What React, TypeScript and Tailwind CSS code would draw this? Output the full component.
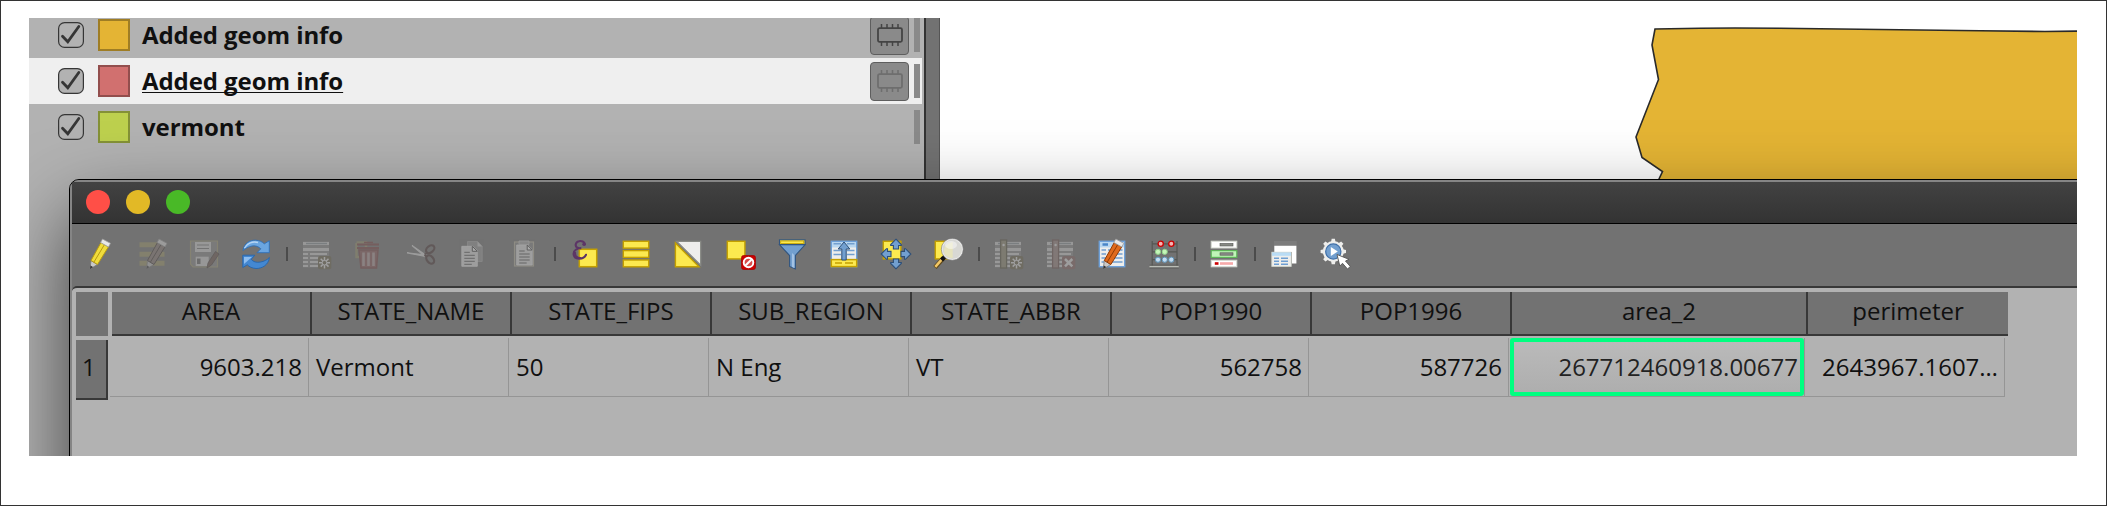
import React from "react";

type IconProps = { children: React.ReactNode; dim?: boolean };

const Icon = ({ children, dim }: IconProps) => (
  <svg viewBox="0 0 32 32" className={dim ? "h-8 w-8 shrink-0 opacity-35" : "h-8 w-8 shrink-0"} fill="none">
    {children}
  </svg>
);

const Separator = () => <div className="-ml-1.5 -mr-2 h-3.5 w-0.5 shrink-0 bg-[#4b4b4b]" />;

const Pencil = ({ body = "#f0dc3c", shade = "#b79a12" }: { body?: string; shade?: string }) => (
  <g>
    <path d="M6 31L7 22.5L13.5 26.5Z" fill="#c9c9c9" stroke="#777" strokeWidth=".8" />
    <path d="M6 31L6.5 27.5L9 29Z" fill="#333" />
    <path d="M7 22.5L17 4.5L24.5 8.8L13.5 26.5Z" fill={body} stroke={shade} strokeWidth="1" />
    <path d="M10 24L20.5 6.5" stroke={shade} strokeWidth="1" />
    <path d="M16.5 4.5L18.5 1L26.5 5.3L24.5 9Z" fill="#e8e8e8" stroke="#999" strokeWidth=".8" />
  </g>
);

const TableGrid = () => (
  <g>
    <rect x="3" y="3.5" width="26" height="26" fill="#8c8c8c" />
    <path d="M3 5.500H29M3 11.500H29" stroke="#dcdcdc" strokeWidth="3" />
    <path d="M6 5.500H27" stroke="#8a949c" strokeWidth="1.400" />
    <path d="M3 16H8M10 16H27M3 20H8M10 20H27M3 24H8M10 24H20M3 28H8M10 28H20" stroke="#e0e0e0" strokeWidth="2" />
  </g>
);

const Star = () => (
  <g>
    <rect x="18" y="18" width="13.3" height="13.3" rx="2" fill="#6a6246" />
    <path d="M24.5 19V30.5M19 24.7H30M20.7 20.8L28.5 28.6M28.5 20.8L20.7 28.6" stroke="#f2f2f2" strokeWidth="1.5" />
    <circle cx="24.5" cy="24.7" r="2.3" fill="#6a6246" stroke="#f2f2f2" />
  </g>
);

const YellowSquare = () => <rect x="3.3" y="3.3" width="17.6" height="17.6" fill="#fce94f" stroke="#c4a000" strokeWidth="1.4" />;

const EditMode = () => (
  <Icon>
    <Pencil />
  </Icon>
);

const MultiEdit = () => (
  <Icon dim>
    <path d="M3.5 6.8H28.5M3.5 16.2H28.5M3.5 25.3H28.5" stroke="#a39c66" strokeWidth="5" />
    <g transform="translate(4.5 0)">
      <Pencil body="#8b7a72" shade="#3f3431" />
    </g>
  </Icon>
);

const SaveEdits = () => (
  <Icon dim>
    <path d="M2.5 3H29.5V29H5L2.5 26Z" fill="#8a8a8a" stroke="#a8a173" strokeWidth="1.2" />
    <rect x="7" y="4" width="16" height="10" fill="#e0e0e0" />
    <path d="M9 7H21M9 10.5H21" stroke="#777" />
    <rect x="7.7" y="18.7" width="13" height="9.3" fill="#ddd" />
    <rect x="9" y="20.5" width="3.5" height="5.5" fill="#666" />
    <path d="M19 30L20 25L27.5 13.5L31 16L23.5 27Z" fill="#6c5148" stroke="#3f3431" strokeWidth=".8" />
  </Icon>
);

const Reload = () => (
  <Icon>
    <path d="M3 12.5C4 5 10 2 15.5 2.2C19.5 2.4 22.3 3.8 24.3 5.8L29.3 2.8V14.7H17L20.8 10.8C18.5 8.5 15.5 7.4 12 8C8.5 8.6 5.5 10.3 3 12.5Z" fill="#6aa5e0" stroke="#2f6fb8" strokeWidth=".9" />
    <path d="M4.5 10C7 4.8 13 3.2 18 4.5" stroke="#b5d5f4" strokeWidth="1.4" />
    <path d="M29.4 19.5C28.5 27 22 30.7 16 30.5C12 30.3 9.3 28.8 7.3 26.8L2.8 29.5V17.2H14.8L11.2 21.3C13.2 23.9 16.5 24.8 20.5 24C24 23.4 27 22 29.4 19.5Z" fill="#4488d2" stroke="#2565ae" strokeWidth=".9" />
    <path d="M4 19H12L4 26Z" fill="#8dbdf0" />
  </Icon>
);

const AddFeature = () => (
  <Icon dim>
    <TableGrid />
    <Star />
  </Icon>
);

const Trash = () => (
  <Icon dim>
    <path d="M4.5 4.5H14V9M4.5 5V19H8" stroke="#9c9568" strokeWidth="2.5" />
    <path d="M7 12H26L24.5 30H9Z" fill="#8d5555" stroke="#783d3d" strokeWidth="1.5" />
    <path d="M11.5 14.5V28M16.5 14.5V28M21.5 14.5V28" stroke="#b9a2a2" strokeWidth="2.6" />
    <path d="M5 6.5H27M5 10H27" stroke="#7c3939" strokeWidth="2.2" />
    <path d="M12 4.5H21" stroke="#7c3939" strokeWidth="1.5" />
  </Icon>
);

const Cut = () => (
  <Icon dim>
    <path d="M3 14.8L22 17L22 18.5Z" fill="#eee" stroke="#e8e8e8" strokeWidth="1.2" />
    <path d="M8 7.5L23 18L21 18.5Z" fill="#eee" stroke="#e8e8e8" strokeWidth="1.2" />
    <ellipse cx="26.2" cy="11.2" rx="4.7" ry="3.2" transform="rotate(-40 26.2 11.2)" stroke="#442c2c" strokeWidth="2.2" />
    <ellipse cx="26.2" cy="21.5" rx="4.7" ry="3.2" transform="rotate(50 26.2 21.5)" stroke="#442c2c" strokeWidth="2.2" />
    <path d="M20.5 16.5L24 14.5M20.5 17L23 19" stroke="#442c2c" strokeWidth="2" />
  </Icon>
);

const Page = () => (
  <g>
    <path d="M0 0H11L15.5 4.5V20H0Z" fill="#dedede" stroke="#f2f2f2" strokeWidth=".8" />
    <path d="M10.5 0V5H15.5Z" fill="#fff" stroke="#444" strokeWidth="1" />
    <path d="M2.5 6H8M2.5 9H13M2.5 12H13M2.5 15H13M2.5 18H10" stroke="#555" strokeWidth="1" />
  </g>
);

const Copy = () => (
  <svg viewBox="0 0 32 32" className="h-8 w-8 shrink-0 opacity-40" fill="none">
    <path d="M11.5 3.5H21.5L26.2 8.2V23.5H11.5Z" fill="#969696" stroke="#aaa" strokeWidth=".8" />
    <path d="M21.5 3.5V8.5H26.2Z" fill="#ccc" />
    <g transform="translate(5.8 8.3)">
      <Page />
    </g>
  </svg>
);

const Paste = () => (
  <svg viewBox="0 0 32 32" className="h-8 w-8 shrink-0 opacity-40" fill="none">
    <rect x="6.5" y="4" width="19" height="24" fill="#868686" stroke="#b9b3a0" strokeWidth="1.2" />
    <g transform="translate(8.7 7)">
      <Page />
    </g>
    <path d="M11 3H21V6.5H11Z" fill="#aaa" stroke="#d0d0d0" strokeWidth=".8" />
  </svg>
);

const SelectExpression = () => (
  <Icon>
    <rect x="11.3" y="11.3" width="17.4" height="17.4" fill="#fce94f" stroke="#c4a000" strokeWidth="1.5" />
    <path d="M17 6.5C16.5 3.5 13.5 2.6 11 3.2C7.3 4 6.7 8.2 9.3 9.7C10.5 10.4 12 10.3 13.3 10.2C9.5 10.3 5.5 12 5.6 16C5.8 22 15.5 22.2 18 16.8" stroke="#5c3566" strokeWidth="2.1" strokeLinecap="round" />
    <path d="M7.2 14C6.5 18.5 9.5 20.3 13 20" stroke="#5c3566" strokeWidth="2" />
    <circle cx="16" cy="6.2" r="1.7" fill="#5c3566" />
  </Icon>
);

const SelectAll = () => (
  <Icon>
    {[3.3, 12.6, 22].map((y) => (
      <rect key={y} x="3.3" y={y} width="25.4" height="6.8" fill="#fce94f" stroke="#c4a000" strokeWidth="1.4" />
    ))}
  </Icon>
);

const Invert = () => (
  <Icon>
    <path d="M4.5 3.3H28.7V27.2Z" fill="#eeeeec" stroke="#888a85" strokeWidth="1.3" />
    <path d="M3.4 5V28.8H27Z" fill="#fce94f" stroke="#c4a000" strokeWidth="1.4" />
  </Icon>
);

const Deselect = () => (
  <Icon>
    <YellowSquare />
    <rect x="17.6" y="17.6" width="13.8" height="13.8" rx="1.8" fill="#cc0000" stroke="#a40000" strokeWidth=".8" />
    <circle cx="24.5" cy="24.5" r="4.8" fill="#d94b4b" stroke="#fff" strokeWidth="1.9" />
    <path d="M21.2 27.8L27.8 21.2" stroke="#fff" strokeWidth="2" />
  </Icon>
);

const Filter = () => (
  <Icon>
    <path d="M3.6 6.8H29L19.4 17.5V31L13.6 28.5V17.5Z" fill="#729fcf" stroke="#32557f" strokeWidth="1.1" />
    <path d="M16 15V29L18.3 30V17" fill="#a3c2e4" />
    <rect x="3.5" y="1.8" width="25.5" height="4.7" fill="#fce94f" stroke="#32557f" strokeWidth="1.1" />
    <rect x="4.7" y="3" width="23" height="2.5" stroke="#c4a000" strokeWidth=".8" />
  </Icon>
);

const MoveTop = () => (
  <Icon>
    <rect x="3.3" y="3.3" width="25.4" height="25.4" fill="#eeeeec" stroke="#6ea0d8" strokeWidth="1.4" />
    <rect x="4" y="4" width="24" height="5.5" fill="#b9d7f0" />
    <path d="M5.5 5.8H13M19 5.8H26.5M5.5 12.5H13M19 12.5H26.5M5.5 16.5H13M19 16.5H26.5" stroke="#729fcf" strokeWidth="1.5" />
    <rect x="3.3" y="21.6" width="25.4" height="7" fill="#fce94f" stroke="#c4a000" strokeWidth="1.5" />
    <path d="M7 25H14M17 25H25" stroke="#c4a000" strokeWidth="1.4" />
    <path d="M16 4L21.8 11H18.2V22H13.8V11H10.2Z" fill="#729fcf" stroke="#2e4f77" strokeWidth="1" />
  </Icon>
);

const PanTo = () => (
  <Icon>
    <YellowSquare />
    {[0, 90, 180, 270].map((angle) => (
      <path key={angle} transform={`rotate(${angle} 16 16)`} d="M16 1.2L21.3 6.5V7.5H18.6V11H13.4V7.5H10.7V6.5Z" fill="#729fcf" stroke="#2e4f77" strokeWidth="1.1" />
    ))}
  </Icon>
);

const ZoomTo = () => (
  <Icon>
    <YellowSquare />
    <path d="M11.5 20L3 29.5" stroke="#5f4a1e" strokeWidth="4.4" />
    <path d="M10 21.2L3.3 28.8" stroke="#f3c766" strokeWidth="2.5" />
    <path d="M13 18.5L9.5 22" stroke="#111" strokeWidth="4" />
    <circle cx="20.3" cy="11.3" r="10.3" fill="#d8d8d4" stroke="#ededed" strokeWidth="1.2" />
    <circle cx="20.3" cy="11.3" r="11" stroke="#777" strokeWidth=".6" />
    <path d="M20.7 4V20C10 20 8 7 20.7 4Z" fill="#e6e3bd" />
    <ellipse cx="19" cy="7" rx="6" ry="4" fill="#fff" opacity=".45" />
  </Icon>
);

const NewField = () => (
  <Icon dim>
    <TableGrid />
    <rect x="8.6" y="2" width="6" height="28" fill="#938d70" stroke="#55503a" strokeWidth="1.3" />
    <circle cx="11.6" cy="7" r="1.2" fill="#eee" />
    <Star />
  </Icon>
);

const DeleteField = () => (
  <Icon dim>
    <TableGrid />
    <rect x="8.6" y="2" width="6" height="28" fill="#9d8580" stroke="#6c4d49" strokeWidth="1.3" />
    <circle cx="11.6" cy="7" r="1.2" fill="#eee" />
    <rect x="18" y="18" width="13.3" height="13.3" rx="2" fill="#86605e" />
    <path d="M21 21L28.3 28.3M28.3 21L21 28.3" stroke="#f0f0f0" strokeWidth="2.5" />
  </Icon>
);

const OrganizeFields = () => (
  <Icon>
    <rect x="3.3" y="3.3" width="25.4" height="25.4" fill="#eeeeec" stroke="#6ea0d8" strokeWidth="1.4" />
    <rect x="4" y="4" width="24" height="5.5" fill="#b9d7f0" />
    <path d="M6.5 6.5H12" stroke="#4a86c8" strokeWidth="2.4" />
    <path d="M5.5 12H10M12 12H26.5M5.5 16H10M12 16H26.5M5.5 20H10M12 20H26.5M5.5 24H8M15 24H26.5" stroke="#729fcf" strokeWidth="1.4" />
    <g transform="translate(1.3 0)">
      <Pencil body="#e06a1c" shade="#8f3b06" />
    </g>
  </Icon>
);

const Abacus = () => (
  <Icon>
    <path d="M4.2 3V28M29 3V28M4 5.8H29M4 13.8H29M4 21.7H29" stroke="#555753" strokeWidth="1.2" />
    <path d="M1.5 28.6H30.7" stroke="#babdb6" strokeWidth="1.8" />
    <path d="M1.5 27.2H30.7M1.5 30H30.7" stroke="#555753" strokeWidth=".8" />
    <g fill="#f5b5b5" stroke="#cc0000" strokeWidth="1.3">
      <circle cx="12.7" cy="5.8" r="2.6" />
      <circle cx="23.3" cy="5.8" r="2.6" />
    </g>
    <g fill="#c5f5b8" stroke="#8fd08a" strokeWidth="1">
      <circle cx="10" cy="13.8" r="2.6" />
      <circle cx="16.7" cy="13.8" r="2.6" />
    </g>
    <g fill="#c4dcf2" stroke="#5d94b8" strokeWidth="1">
      <circle cx="10" cy="21.7" r="2.6" />
      <circle cx="16.7" cy="21.7" r="2.6" />
      <circle cx="23.3" cy="21.7" r="2.6" />
    </g>
  </Icon>
);

const ConditionalFormat = () => (
  <Icon>
    <rect x="3.2" y="3.2" width="25.6" height="6.8" fill="#fff" stroke="#d3d7cf" />
    <rect x="3.2" y="12.6" width="25.6" height="6.8" fill="#c0f5b8" stroke="#5fb65a" strokeWidth="1.2" />
    <rect x="3.2" y="22.2" width="25.6" height="6.6" fill="#fff" stroke="#d3d7cf" />
    <rect x="12" y="5.4" width="13" height="2.6" fill="#888a85" stroke="#555753" strokeWidth=".6" />
    <rect x="12" y="14.8" width="13" height="2.4" fill="#888a85" stroke="#555753" strokeWidth=".6" />
    <rect x="6.8" y="24.2" width="3.7" height="2.6" fill="#cc0000" />
    <rect x="12" y="24.2" width="13" height="2.6" fill="#f6a9a9" />
  </Icon>
);

const Dock = () => (
  <Icon>
    <rect x="6" y="3" width="22.7" height="4.6" fill="#7c7c7c" />
    <path d="M6.3 7.8H28.4V25.5H24V14H6.3Z" fill="#fff" />
    <rect x="3.8" y="14.2" width="19.4" height="14.2" fill="#eeeeec" stroke="#d3d7cf" strokeWidth=".8" />
    <rect x="4" y="14.4" width="19" height="3.4" fill="#b9dcf5" />
    <path d="M6 20.2H11M13 20.2H20M6 23.2H11M13 23.2H20M6 26.2H11M13 26.2H20" stroke="#6f9fd2" strokeWidth="1.4" />
  </Icon>
);

const Actions = () => (
  <Icon>
    {[0, 45, 90, 135, 180, 225, 270, 315].map((angle) => (
      <path key={angle} transform={`rotate(${angle} 13.3 13.5)`} d="M11.1 4L11.7 .8H14.9L15.5 4Z" fill="#eeeeec" />
    ))}
    <circle cx="13.3" cy="13.5" r="10.4" fill="#eeeeec" />
    <circle cx="13.3" cy="13.5" r="7.6" fill="#729fcf" stroke="#3f6fa8" strokeWidth="1.2" />
    <path d="M10.8 9V18L17.8 13.5Z" fill="#fff" />
    <path d="M17 16.5L19.8 28L22.5 25.3L27.5 31L30.3 28.5L25.5 23L29 21.3Z" fill="#fff" stroke="#555" strokeWidth=".9" />
  </Icon>
);

const Toolbar = () => (
  <div className="flex h-[62px] items-center gap-5 bg-[#727272] pb-0.5 pl-3">
    <EditMode />
    <MultiEdit />
    <SaveEdits />
    <Reload />
    <Separator />
    <AddFeature />
    <Trash />
    <Cut />
    <Copy />
    <Paste />
    <Separator />
    <SelectExpression />
    <SelectAll />
    <Invert />
    <Deselect />
    <Filter />
    <MoveTop />
    <PanTo />
    <ZoomTo />
    <Separator />
    <NewField />
    <DeleteField />
    <OrganizeFields />
    <Abacus />
    <Separator />
    <ConditionalFormat />
    <Separator />
    <Dock />
    <Actions />
  </div>
);

type Field = { name: string; value: string; numeric?: boolean; selected?: boolean };

const fields: Field[] = [
  { name: "AREA", value: "9603.218", numeric: true },
  { name: "STATE_NAME", value: "Vermont" },
  { name: "STATE_FIPS", value: "50" },
  { name: "SUB_REGION", value: "N Eng" },
  { name: "STATE_ABBR", value: "VT" },
  { name: "POP1990", value: "562758", numeric: true },
  { name: "POP1996", value: "587726", numeric: true },
  { name: "area_2", value: "267712460918.00677", numeric: true, selected: true },
  { name: "perimeter", value: "2643967.1607…", numeric: true },
];

const Cell = ({ value, numeric, selected }: Field) => {
  if (selected) {
    return (
      <div className="flex border-r border-[#959595] pl-px">
        <div className="flex grow items-center justify-end rounded-[3px] border-4 border-[#00ff80] bg-linear-to-b from-[#bababa] to-[#aeaeae] pr-0.5 text-[#222]">
          {value}
        </div>
      </div>
    );
  }
  return (
    <div className={numeric ? "flex items-center justify-end border-r border-[#959595] pr-1.5" : "flex items-center border-r border-[#959595] pl-[7px]"}>
      {value}
    </div>
  );
};

const AttributeTable = () => (
  <div className="h-[170px] rounded-tl-[5px] border-t-2 border-[#383838] bg-[#b2b2b2] pl-1 pt-1 text-[24px] leading-8 text-[#101010]">
    <div className="flex h-11 gap-1">
      <div className="w-8 bg-[#727272]" />
      <div className="grid w-[1896px] grid-cols-[repeat(7,200px)_296px_200px] border-b-2 border-[#383838] bg-[#727272]">
        {fields.map((f, i) => (
          <div key={f.name} className={i < 8 ? "flex items-center justify-center border-r-2 border-[#383838] pb-1" : "flex items-center justify-center pb-1"}>
            {f.name}
          </div>
        ))}
      </div>
    </div>
    <div className="flex">
      <div className="mt-1 flex h-[60px] w-8 items-center border-b-2 border-r-2 border-[#383838] bg-[#727272] pb-1 pl-1.5">1</div>
      <div className="ml-0.5 mt-0.5 grid h-[59px] w-[1895px] grid-cols-[199px_repeat(6,200px)_296px_200px] border-b border-[#959595]">
        {fields.map((f) => (
          <Cell key={f.name} {...f} />
        ))}
      </div>
    </div>
  </div>
);

const Chip = ({ faded }: { faded?: boolean }) => (
  <div className="flex h-[39px] w-[39px] items-center justify-center rounded-[4px] border border-[#5e5e5e] bg-[#8a8a8a]">
    <svg viewBox="0 0 26 24" className="h-6 w-[26px]" fill="none" stroke={faded ? "#6e6e6e" : "#444"}>
      <rect x="1" y="5.2" width="24" height="13.6" rx="1.5" strokeWidth="1.8" />
      <path d="M4.5 5V1M10 5V1M15.5 5V1M21 5V1M4.5 19V23M10 19V23M15.5 19V23M21 19V23" strokeWidth="1.5" />
    </svg>
  </div>
);

const Check = ({ filled }: { filled?: boolean }) => (
  <svg viewBox="0 0 26 26" className="h-[26px] w-[26px]" fill="none">
    <rect x=".6" y=".6" width="24.8" height="24.8" rx="6" fill={filled ? "#b2b2b2" : "none"} stroke="#363636" strokeWidth="1.2" />
    <path d="M4.5 14.3L9.8 19.8L20.8 4.5" stroke="#363636" strokeWidth="2.8" strokeLinecap="round" />
  </svg>
);

type LayerProps = { name: string; swatch: string; active?: boolean; chip?: boolean };

const Layer = ({ name, swatch, active, chip }: LayerProps) => (
  <div className={active ? "mr-0.5 flex h-[46px] items-center bg-[#efefef] pl-[29px]" : "mr-0.5 flex h-[46px] items-center pl-[29px]"}>
    <Check filled={active} />
    <div className={`ml-3.5 h-8 w-8 border-2 border-black/30 bg-clip-border ${swatch}`} />
    <div className={active ? "ml-3 text-[24px] font-bold leading-8 tracking-[-0.07px] underline decoration-1 underline-offset-2 [text-decoration-skip-ink:none]" : "ml-3 text-[24px] font-bold leading-8 tracking-[-0.07px]"}>
      {name}
    </div>
    <div className="ml-auto mr-[5px]">{chip && <Chip faded={active} />}</div>
    <div className="mr-0.5 h-[34px] w-1.5 bg-[#8a8a8a]" />
  </div>
);

const LayerPanel = () => (
  <div className="-mt-1.5 h-[444px] w-[895px] bg-[#b2b2b2] text-[#101010]">
    <Layer name="Added geom info" swatch="bg-[#e4b434]" chip />
    <Layer name="Added geom info" swatch="bg-[#d1706f]" active chip />
    <Layer name="vermont" swatch="bg-[#bdd04e]" />
  </div>
);

const MapCanvas = () => (
  <svg viewBox="940 18 1137 438" className="h-[438px] w-[1137px] bg-white">
    <path
      d="M1655 29L1700 28.3L1735 28L1780 28.3L1880 29.5L1980 30.8L2045 31.5L2085 31V200H1650L1659 179L1662.5 171.5L1642 157.5L1636 137L1658.5 79.5L1652 45Z"
      fill="#e4b434"
      stroke="#2a2a2a"
      strokeWidth="1.6"
    />
  </svg>
);

const AttributeWindow = () => (
  <div className="absolute left-10 top-[161px] h-[400px] w-[2100px] overflow-hidden rounded-tl-[10px] border border-black bg-[#727272] shadow-[0_36px_80px_rgba(0,0,0,0.65)]">
    <div className="h-full border-l-2 border-t-2 border-[#858585]">
      <div className="flex h-[42px] items-center gap-4 border-b border-black bg-linear-to-b from-[#424242] to-[#333333] pb-px pl-3.5">
        <div className="h-6 w-6 rounded-full bg-[#ff4f47]" />
        <div className="h-6 w-6 rounded-full bg-[#e2b926]" />
        <div className="h-6 w-6 rounded-full bg-[#49b927]" />
      </div>
      <Toolbar />
      <AttributeTable />
    </div>
  </div>
);

export default function App() {
  return (
    <div className="h-[506px] w-[2107px] border border-[#333] bg-white pl-7 pt-[17px] font-['Open_Sans','Noto_Sans',sans-serif]">
      <div className="relative flex h-[438px] w-[2048px] overflow-hidden">
        <LayerPanel />
        <div className="w-4 border-l-2 border-r border-l-[#333] border-r-[#555] bg-[#727272]" />
        <MapCanvas />
        <AttributeWindow />
      </div>
    </div>
  );
}
